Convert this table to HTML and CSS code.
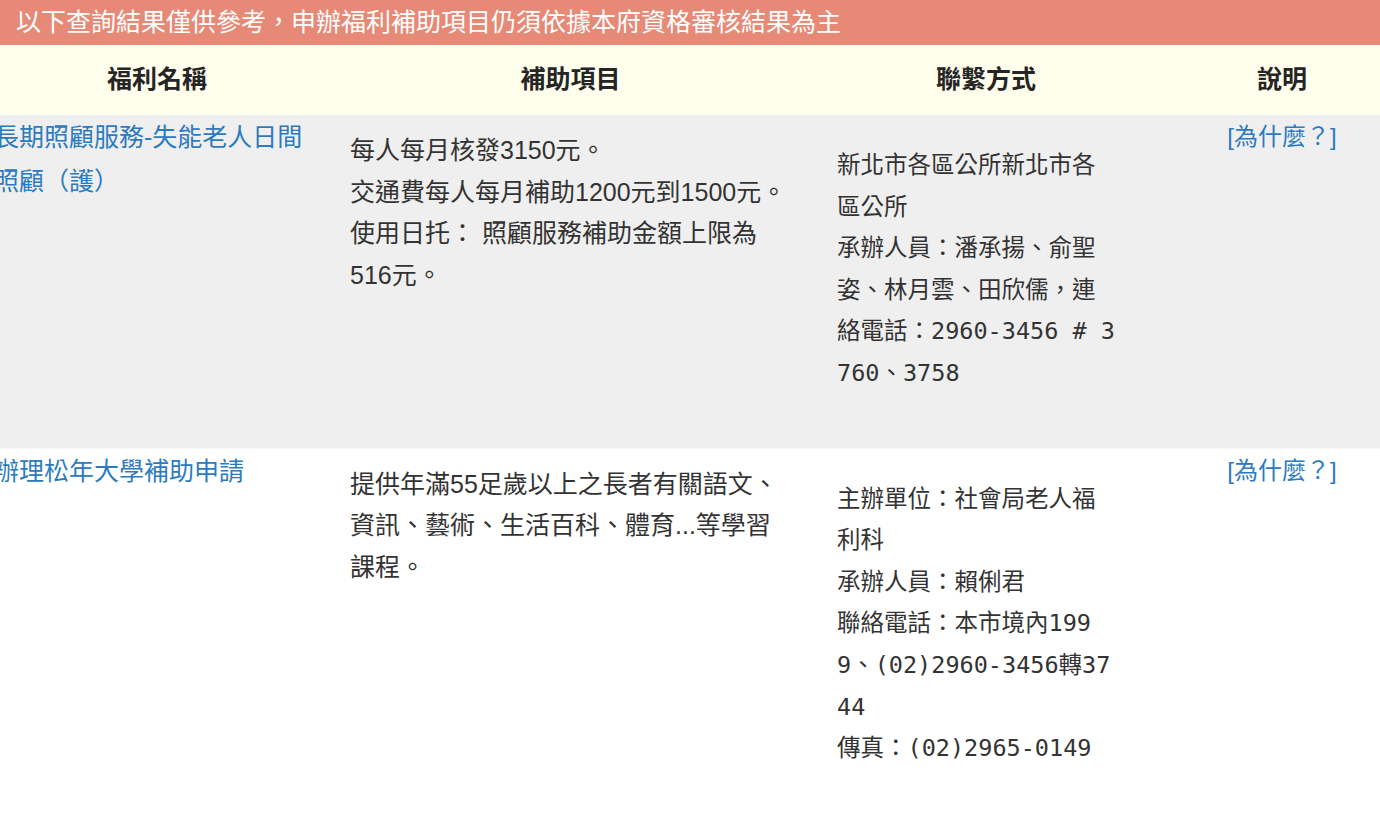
FILE: index.html
```html
<!DOCTYPE html>
<html lang="zh-Hant">
<head>
<meta charset="utf-8">
<title>福利查詢結果</title>
<link rel="stylesheet" href="styles.css">
</head>
<body>
<div class="notice">以下查詢結果僅供參考，申辦福利補助項目仍須依據本府資格審核結果為主</div>
<div class="sheet">
  <div class="row head">
    <div class="th">福利名稱</div>
    <div class="th">補助項目</div>
    <div class="th">聯繫方式</div>
    <div class="th">說明</div>
  </div>
  <div class="row odd">
    <div class="c-name"><a href="#">長期照顧服務-失能老人日間照顧（護）</a></div>
    <div class="c-item">每人每月核發3150元。<br>交通費每人每月補助1200元到1500元。<br>使用日托： 照顧服務補助金額上限為516元。</div>
    <div class="c-contact">新北市各區公所新北市各區公所<br>承辦人員：潘承揚、俞聖姿、林月雲、田欣儒，連絡電話：2960-3456 # 3760、3758</div>
    <div class="c-note"><a href="#">[為什麼？]</a></div>
  </div>
  <div class="row even">
    <div class="c-name"><a href="#">辦理松年大學補助申請</a></div>
    <div class="c-item">提供年滿55足歲以上之長者有關語文、資訊、藝術、生活百科、體育...等學習課程。</div>
    <div class="c-contact">主辦單位：社會局老人福利科<br>承辦人員：賴俐君<br>聯絡電話：本市境內1999、(02)2960-3456轉3744<br>傳真：(02)2965-0149</div>
    <div class="c-note"><a href="#">[為什麼？]</a></div>
  </div>
</div>
</body>
</html>
```

FILE: styles.css
```css
html, body {
  margin: 0;
  padding: 0;
  background: #ffffff;
  overflow: hidden;
}

body {
  font-family: "Liberation Sans", "Noto Sans CJK TC", sans-serif;
  color: #333333;
}

a {
  color: #2c7bc0;
  text-decoration: none;
}

.notice {
  height: 45px;
  line-height: 45px;
  padding-left: 16px;
  background: #e68a77;
  color: #ffffff;
  font-size: 25px;
  white-space: nowrap;
}

.sheet {
  margin-left: -21px;
  width: 1419px;
}

.row {
  display: grid;
  grid-template-columns: 356px 471px 360px 232px;
  align-items: start;
}

.head {
  box-sizing: border-box;
  height: 70px;
  padding-bottom: 7px;
  align-items: center;
  background: #fffdeb;
}

.th {
  text-align: center;
  font-size: 25px;
  font-weight: bold;
  color: #252525;
}

.odd {
  background: #efefef;
}

.even {
  background: #ffffff;
  border-top: 1px solid #f7f7f7;
}

.c-name {
  padding: 0 15px;
  font-size: 25px;
  line-height: 44px;
}

.c-item {
  padding: 15px 14px 0 15px;
  font-size: 25px;
  line-height: 41.7px;
}

.c-contact {
  padding: 30px 49px 53px 31px;
  font-family: "DejaVu Sans Mono", "Noto Sans CJK TC", monospace;
  font-size: 23.5px;
  line-height: 41.6px;
  word-break: break-all;
}

.c-note {
  text-align: center;
  font-size: 24px;
  line-height: 44px;
}
```
